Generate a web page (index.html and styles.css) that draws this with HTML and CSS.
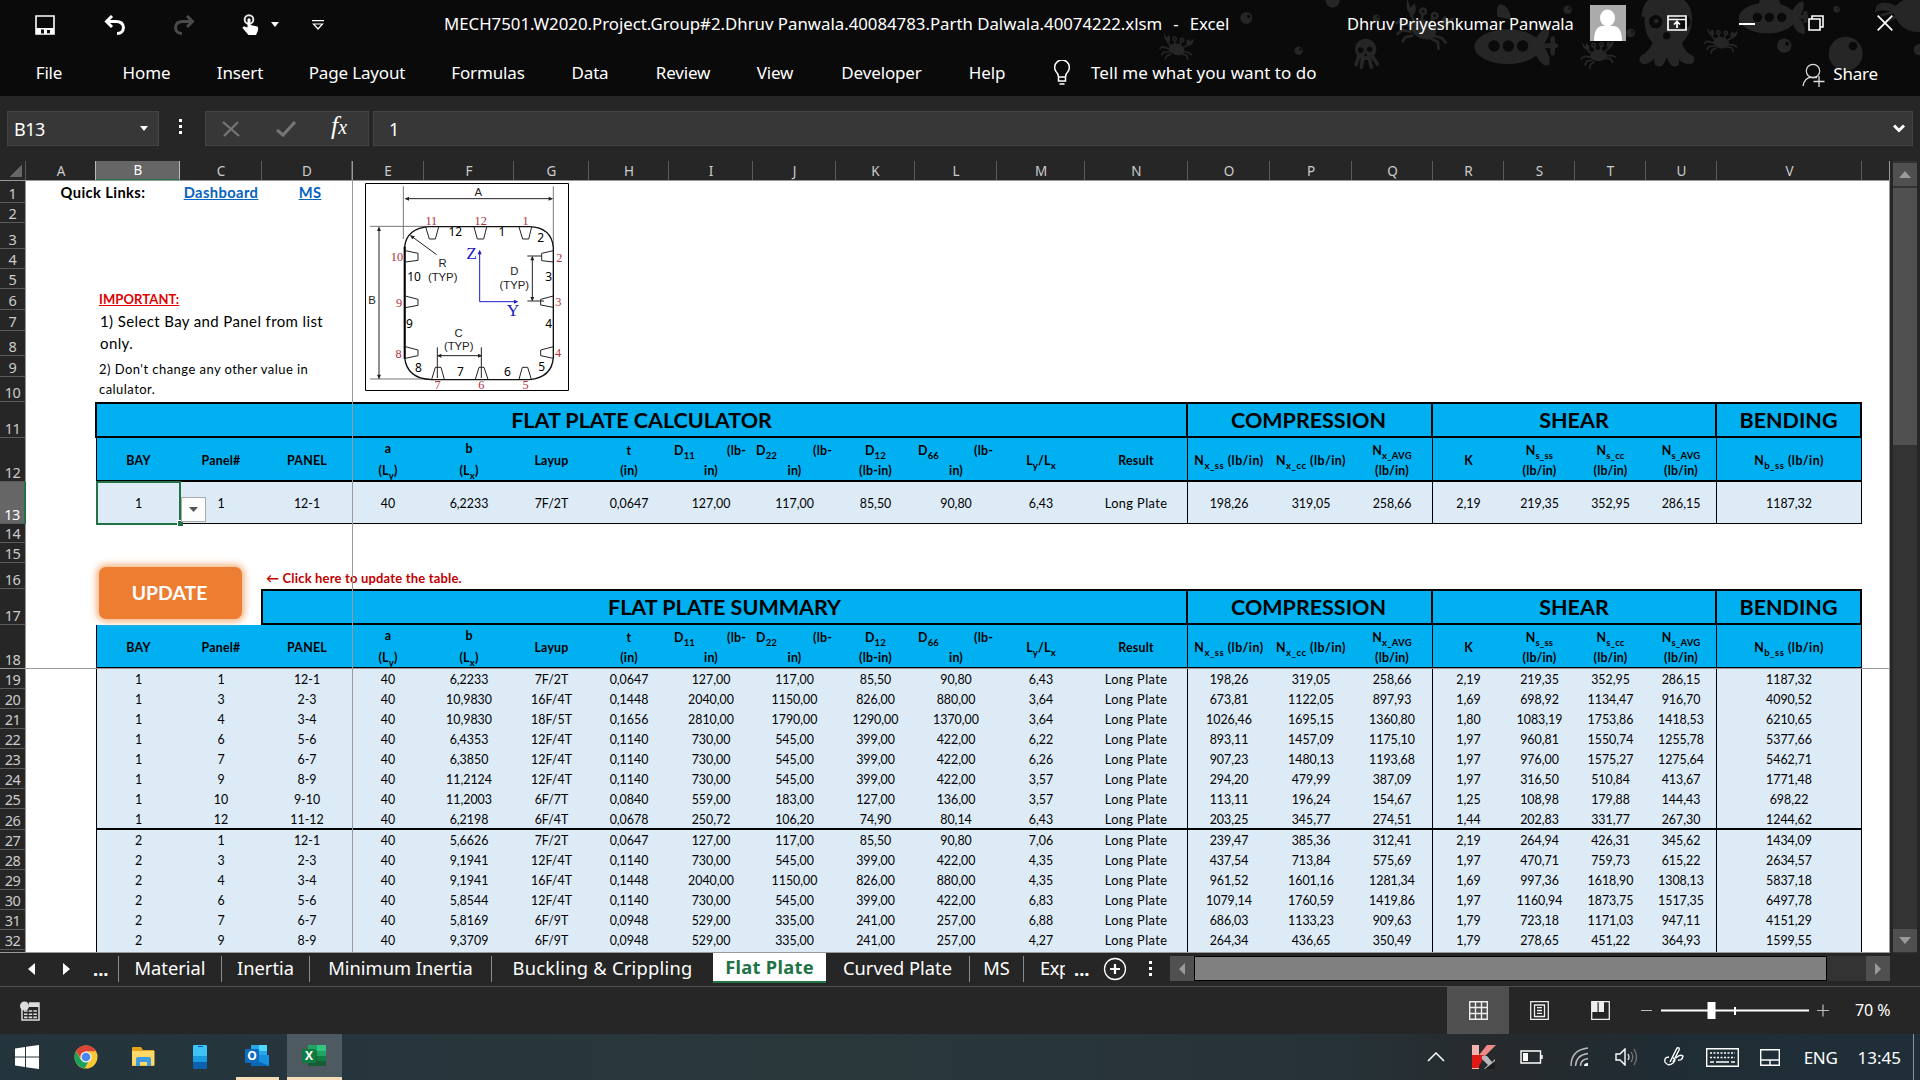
FILE: index.html
```html
<!DOCTYPE html>
<html lang="en">
<head>
<meta charset="utf-8">
<title>MECH7501.W2020.Project.Group#2 - Excel</title>
<link rel="stylesheet" href="styles.css">
</head>
<body>
<div class="app">
  <header class="ribbon">
    <svg class="sea" viewBox="0 0 2340 288" preserveAspectRatio="none" aria-hidden="true">
      <defs>
        <g id="crab">
          <ellipse cx="0" cy="0" rx="24" ry="17" transform="rotate(15)"/>
          <g fill="none" stroke="#262626" stroke-width="5">
            <path d="M-20 0l-22-8-10 6M-20 8l-18 0-8 10M-16 14l-14 6-4 10M20 8l16 2 10 8M16 14l14 4 4 14M-18-10l-10-14M20-6l18-8M-6-14v-14M10-12l4-14"/>
            <circle cx="-6" cy="-32" r="5"/><circle cx="16" cy="-28" r="5"/>
          </g>
          <path d="M-38-50q-2 26 16 28q6-10-2-22l-6 10zM52-32q-4 24-20 20q-8-10 4-20l4 8z"/>
        </g>
        <g id="bubble"><circle r="18"/><circle cx="7" cy="-5" r="5" fill="#0a0a0a"/></g>
      </defs>
      <g fill="#262626">
        <use href="#crab" x="110" y="148"/>
        <use href="#bubble" x="319" y="54"/>
        <circle cx="578" cy="2" r="21"/>
        <use href="#bubble" transform="translate(476 152) scale(.7)"/>
        <use href="#bubble" transform="translate(709 54) scale(.6)"/>
        <g>
          <ellipse cx="677" cy="148" rx="32" ry="32"/>
          <path d="M656 170l-8 24M668 176l-4 26M688 176l6 26M698 170l14 22" stroke="#262626" stroke-width="11" stroke-linecap="round"/>
          <g fill="#0a0a0a"><circle cx="662" cy="150" r="8"/><circle cx="689" cy="148" r="8"/><circle cx="677" cy="165" r="4"/></g>
        </g>
        <use href="#crab" transform="translate(850 88) scale(1.65) rotate(10)"/>
        <path d="M1072 50q-6-36 10-38q30 8 30 46z"/>
        <ellipse cx="1103" cy="140" rx="100" ry="52"/>
        <path d="M1185 120q20-38 42-34q6 20-18 48q26 34 18 62q-26 6-42-40z"/>
        <path d="M1212 137h36M1238 116v44" stroke="#262626" stroke-width="14" stroke-linecap="round"/>
        <g fill="#0a0a0a"><circle cx="1062" cy="138" r="17"/><circle cx="1105" cy="138" r="17"/><circle cx="1148" cy="138" r="17"/></g>
        <use href="#bubble" transform="translate(1283 29) scale(.7)"/>
        <use href="#bubble" transform="translate(1472 99) scale(.7)"/>
        <use href="#crab" transform="translate(1376 166) scale(1.05) rotate(-15)"/>
        <path d="M1504 50q6-58 46-58h66q36 12 40 58q2 50-30 78q8 30 34 40q10 22-12 24q-20 0-32-14q6 22-12 22q-16-2-24-30q-8 30-22 30q-20 0-14-26q-16 20-34 18q-18-6-8-24q26-14 36-40q-28-28-24-78z"/>
        <g fill="#0a0a0a"><circle cx="1547" cy="65" r="20"/><circle cx="1632" cy="65" r="20"/><circle cx="1580" cy="107" r="11"/></g>
        <circle cx="1549" cy="63" r="7"/>
        <use href="#crab" transform="translate(1744 128) rotate(-5)"/>
        <path d="M1860-4h56l6 20h-66z"/>
        <ellipse cx="1882" cy="54" rx="86" ry="46"/>
        <path d="M1954 36q20-34 36-32q6 20-12 48q22 30 16 50q-24 4-38-36z"/>
        <path d="M1980 50h24M1996 34v34" stroke="#262626" stroke-width="12"/>
        <g fill="#0a0a0a"><circle cx="1852" cy="52" r="14"/><circle cx="1888" cy="52" r="14"/><circle cx="1925" cy="52" r="14"/></g>
        <use href="#bubble" transform="translate(1933 137) scale(1.2)"/>
        <use href="#bubble" transform="translate(2090 28) scale(.55)"/>
        <circle cx="2117" cy="161" r="51"/><circle cx="2139" cy="138" r="13" fill="#0a0a0a"/>
        <path d="M2262 30q30-40 80-34v96q-60 4-80-62zM2210 30q4-28 50-12l20 16-30-4q-30-6-40 0zM2222 46l40-10M2236 66l36-18" stroke="#262626" stroke-width="8"/>
        <circle cx="2338" cy="149" r="17"/>
      </g>
    </svg>
    <div class="titlebar">
      <div class="quick">
        <svg class="i-save" width="20" height="20" viewBox="0 0 20 20"><path d="M1 1h18v18H1z" fill="none" stroke="#fff" stroke-width="1.6"/><path d="M1 13h18v6h-4v-4h-3v4H1z" fill="#fff"/><path d="M6 14.5h3v4H6z" fill="#111"/></svg>
        <svg class="i-undo" width="22" height="20" viewBox="0 0 22 20"><path d="M8 1L2.500 6.500 8 12M3 6.500h9q7 0 7.500 6-.5 6-6.500 6" fill="none" stroke="#fff" stroke-width="3"/></svg>
        <svg class="i-redo" width="22" height="20" viewBox="0 0 22 20"><path d="M14 1l5.500 5.500L14 12M19 6.500h-9q-7 0-7.500 6 .5 6 6.500 6" fill="none" stroke="#4a4a4a" stroke-width="3"/></svg>
        <svg class="i-touch" width="18" height="22" viewBox="0 0 18 22"><circle cx="7" cy="5.500" r="4.300" fill="none" stroke="#e6e6e6" stroke-width="2"/><path d="M5.500 5q1.500-1.500 3 0v6l7 1.500q1 1 .5 4L14 21H6.500L.5 14q0-2 2-1.500l3 1z" fill="#fff"/></svg>
        <svg class="i-caret" width="8" height="5" viewBox="0 0 8 5"><path d="M0 0h8L4 5z" fill="#fff"/></svg>
        <svg class="i-custom" width="12" height="10" viewBox="0 0 12 10"><path d="M0 .7h12M1.500 4h9L6 9z" fill="none" stroke="#fff" stroke-width="1.200"/></svg>
      </div>
      <div class="doc">MECH7501.W2020.Project.Group#2.Dhruv Panwala.40084783.Parth Dalwala.40074222.xlsm<span class="dash">-</span>Excel</div>
      <div class="account">Dhruv Priyeshkumar Panwala</div>
      <svg class="avatar" width="36" height="36" viewBox="0 0 36 36"><path d="M0 0h36v36H0z" fill="#ababab"/><ellipse cx="17.500" cy="13" rx="7.500" ry="8.500" fill="#fff"/><path d="M4 36q0-14 8-15h12q8 1 8 15z" fill="#fff"/></svg>
      <svg class="w-ribbon" width="20" height="16" viewBox="0 0 20 16"><path d="M1 1h18v14H1zM1 4.500h18M10 13V7M7 9.500l3-3 3 3" fill="none" stroke="#fff" stroke-width="1.700"/></svg>
      <svg class="w-min" width="16" height="2"><path d="M0 1h16" stroke="#fff" stroke-width="2"/></svg>
      <svg class="w-max" width="16" height="16" viewBox="0 0 16 16"><path d="M1 4h11v11H1zM4 4V1h11v11h-3" fill="none" stroke="#fff" stroke-width="1.600"/></svg>
      <svg class="w-close" width="16" height="16" viewBox="0 0 16 16"><path d="M.7.700l14.600 14.600M15.300.700L.7 15.300" stroke="#fff" stroke-width="1.700"/></svg>
    </div>
    <nav class="tabs">
      <span class="t-file">File</span><span class="t-home">Home</span><span class="t-insert">Insert</span><span class="t-layout">Page Layout</span><span class="t-formulas">Formulas</span><span class="t-data">Data</span><span class="t-review">Review</span><span class="t-view">View</span><span class="t-dev">Developer</span><span class="t-help">Help</span>
      <svg class="bulb" width="18" height="26" viewBox="0 0 18 26"><path d="M5.500 17q0-3-2.500-5.500a7.300 7.300 0 1 1 12 0Q12.500 14 12.500 17zM5.500 17v4h7v-4M6.500 24h5" fill="none" stroke="#fff" stroke-width="1.500"/></svg>
      <span class="tell">Tell me what you want to do</span>
      <svg class="person" width="24" height="24" viewBox="0 0 24 24"><circle cx="11" cy="8" r="6.700" fill="none" stroke="#ddd" stroke-width="1.200"/><path d="M1 23q2-9 9-8.500h5M11.500 18.500h11M17 13v11" fill="none" stroke="#ddd" stroke-width="1.300"/></svg>
      <span class="share">Share</span>
    </nav>
  </header>

  <section class="formula">
    <div class="namebox"><span>B13</span><svg width="8" height="5" viewBox="0 0 8 5"><path d="M0 0h8L4 5z" fill="#fff"/></svg></div>
    <svg class="grip" width="4" height="16"><path d="M0 0h3v3H0zM0 6h3v3H0zM0 12h3v3H0z" fill="#fff"/></svg>
    <div class="fx">
      <svg width="18" height="16" viewBox="0 0 18 16"><path d="M1 1l16 14M16 1L2 15" stroke="#757575" stroke-width="2.300"/></svg>
      <svg width="20" height="16" viewBox="0 0 20 16"><path d="M1 9l6 5L19 1" fill="none" stroke="#757575" stroke-width="3.200"/></svg>
      <span class="fxs"><i>f</i><i class="x">x</i></span>
    </div>
    <div class="finput"><span>1</span><svg width="12" height="9" viewBox="0 0 12 9"><path d="M1 1.500l5 5 5-5" fill="none" stroke="#fff" stroke-width="3"/></svg></div>
  </section>

  <main class="work">
    <div class="sheet" id="sheet">
      <div class="freeze-v"></div>
      <div class="freeze-h"></div>
      <svg class="diagram" viewBox="75 69 612 624" preserveAspectRatio="none">
        <path d="M76.500 70.500h609v621h-609z" fill="#fff" stroke="#000" stroke-width="3"/>
        <g fill="none" stroke="#777" stroke-width="3"><path d="M190 79v158M640 79v180M90 199h170M90 657h180"/></g>
        <path d="M194 262q4-56 72-62h302q66 2 72 62v330q-4 60-72 67H274q-74-4-80-67z" fill="none" stroke="#111" stroke-width="4"/>
        <path d="M194 260v336" stroke="#000" stroke-width="6"/>
        <g fill="none" stroke="#222" stroke-width="3">
          <path d="M257 201l11 36h18l10-36M402 201l10 36h19l9-36M537 201l11 36h18l9-36"/>
          <path d="M275 658l11-36h17l10 36M406 658l11-36h15l12 36M537 658l10-36h16l11 36"/>
          <path d="M196 272l38 8v21l-38 5M196 408l38 10v18l-38 7M196 560l38 10v17l-38 8"/>
          <path d="M640 272l-35 8v22l35 4M640 408l-38 10v17l38 7M640 560l-38 10v17l38 8"/>
          <path d="M197 116h440M117 202v454M290 284l-78-57M577 290v132M562 288h44M562 423h50M292 587h132M292 562v92M424 562v92"/>
        </g>
        <g fill="#222"><path d="M194 116l13-6v12zM639 116l-13-6v12zM117 200l-6 13h12zM117 657l-6-13h12zM210 226l15 3-8 9zM577 288l-6 13h12zM577 424l-6-13h12zM291 587l13-6v12zM427 587l-13-6v12z"/></g>
        <path d="M419 274v151h112" fill="none" stroke="#1c1cc8" stroke-width="3"/><path d="M419 269l-6 14h12zM535 425l-13-6v12z" fill="#1c1cc8"/>
        <g class="d-red"><text x="274" y="196">11</text><text x="422" y="196">12</text><text x="557" y="196">1</text><text x="171" y="304">10</text><text x="658" y="306">2</text><text x="177" y="441">9</text><text x="655" y="437">3</text><text x="176" y="593">8</text><text x="654" y="591">4</text><text x="293" y="688">7</text><text x="424" y="688">6</text><text x="557" y="688">5</text></g>
        <g class="d-num"><text x="346" y="228">12</text><text x="486" y="228">1</text><text x="602" y="246">2</text><text x="222" y="363">10</text><text x="626" y="363">3</text><text x="208" y="503">9</text><text x="626" y="503">4</text><text x="235" y="636">8</text><text x="361" y="648">7</text><text x="502" y="648">6</text><text x="605" y="633">5</text></g>
        <g class="d-lab"><text x="415" y="108">A</text><text x="96" y="431">B</text><text x="308" y="321">R</text><text x="308" y="362">(TYP)</text><text x="523" y="346">D</text><text x="523" y="388">(TYP)</text><text x="356" y="530">C</text><text x="356" y="571">(TYP)</text></g>
        <g class="d-ax"><text x="395" y="296">Z</text><text x="519" y="469">Y</text></g>
      </svg>
      <button class="update">UPDATE</button>
      <div class="note note1">1) Select Bay and Panel from list<br>only.</div>
      <div class="note note2">2) Don't change any other value in<br>calulator.</div>
    </div>
    <div class="vscroll">
      <div class="vbtn"><svg width="12" height="7" viewBox="0 0 12 7"><path d="M0 7h12L6 0z" fill="#9a9a9a"/></svg></div>
      <div class="vthumb"></div>
      <div class="vbtn vdown"><svg width="12" height="7" viewBox="0 0 12 7"><path d="M0 0h12L6 7z" fill="#9a9a9a"/></svg></div>
    </div>
  </main>

  <nav class="sheettabs">
    <svg class="s-prev" width="7" height="12"><path d="M7 0v12L0 6z" fill="#fff"/></svg>
    <svg class="s-next" width="7" height="12"><path d="M0 0v12l7-6z" fill="#fff"/></svg>
    <span class="s-more">...</span>
    <span class="s s1"><b>Material</b></span><span class="s s2"><b>Inertia</b></span><span class="s s3"><b>Minimum Inertia</b></span><span class="s s4"><b>Buckling &amp; Crippling</b></span><span class="s active"><b>Flat Plate</b></span><span class="s s6"><b>Curved Plate</b></span><span class="s s7"><b>MS</b></span><span class="s8">Exp</span>
    <span class="s-more2">...</span>
    <svg class="s-plus" width="24" height="24" viewBox="0 0 24 24"><circle cx="12" cy="12" r="10.500" fill="none" stroke="#fff" stroke-width="1.300"/><path d="M12 7v10M7 12h10" stroke="#fff" stroke-width="2.200"/></svg>
    <svg class="s-grip" width="4" height="16"><path d="M0 0h3v3H0zM0 6h3v3H0zM0 12h3v3H0z" fill="#fff"/></svg>
    <div class="hscroll">
      <div class="hbtn"><svg width="6" height="12"><path d="M6 0v12L0 6z" fill="#9a9a9a"/></svg></div>
      <div class="hthumb"></div>
      <div class="hbtn hright"><svg width="6" height="12"><path d="M0 0v12l6-6z" fill="#9a9a9a"/></svg></div>
    </div>
  </nav>

  <footer class="status">
    <svg class="macro" width="21" height="20" viewBox="0 0 21 20"><path d="M2 6v13h17V2H9" fill="none" stroke="#ddd" stroke-width="1.500"/><circle cx="4.500" cy="5" r="4.500" fill="#ddd"/><path d="M9 2h10v4H9z" fill="#ddd"/><path d="M4 10h13M4 13.200h13M4 16.400h13" stroke="#ddd" stroke-width="1.600" stroke-dasharray="3.500 1.200"/></svg>
    <div class="view on"><svg width="19" height="19" viewBox="0 0 19 19"><path d="M.7.700h17.600v17.600H.7zM6.500 1v17M12.500 1v17M1 6.500h17M1 12.500h17" fill="none" stroke="#eee" stroke-width="1.400"/></svg></div>
    <div class="view"><svg width="19" height="19" viewBox="0 0 19 19"><path d="M.7.700h17.600v17.600H.7zM4.500 4h10v11.500h-10zM7 6.700h5M7 9.500h5M7 12.300h5" fill="none" stroke="#eee" stroke-width="1.300"/></svg></div>
    <div class="view"><svg width="19" height="19" viewBox="0 0 19 19"><path d="M.7.700h17.600v17.600H.7z" fill="none" stroke="#eee" stroke-width="1.300"/><path d="M1 1h5.500v10H1zM7.700 1H13v10H7.700z" fill="#eee"/></svg></div>
    <svg class="slider" width="190" height="20" viewBox="0 0 190 20"><path d="M0 9.500h11M176 9.500h12M182 3.500v12" stroke="#bbb" stroke-width="1.200"/><path d="M20 9.500h148" stroke="#fff" stroke-width="1.800"/><path d="M66.500 1h8v17h-8zM93 6h2v8h-2z" fill="#fff"/></svg>
    <span class="zoom">70 %</span>
  </footer>

  <footer class="taskbar">
    <svg class="win" width="24" height="24" viewBox="0 0 24 24"><path d="M0 3.500l10-1.500v9.500H0zM11 1.800L24 0v11.500H11zM0 12.500h10V22L0 20.500zM11 12.500h13V24l-13-1.800z" fill="#fff"/></svg>
    <svg class="chrome" width="24" height="24" viewBox="0 0 24 24"><circle cx="12" cy="12" r="11.500" fill="#fbc834"/><path d="M12 .5A11.500 11.500 0 0 1 22 6.300H12L6.500 13 2 6.300A11.500 11.500 0 0 1 12 .5z" fill="#dc4438"/><path d="M2 6.300A11.500 11.500 0 0 0 10.500 23.400L16 14l-9 1z" fill="#1ba15e"/><circle cx="12" cy="12" r="5.600" fill="#f2f2f2"/><circle cx="12" cy="12" r="4.300" fill="#4687f0"/></svg>
    <svg class="folder" width="23" height="20" viewBox="0 0 23 20"><path d="M0 1q0-1 1-1h8l2 3h11v16H0z" fill="#e8a21c"/><path d="M0 4h22.500v14.500H0z" fill="#ffd968"/><path d="M4 19v-7q0-2 2-2h11q2 0 2 2v7h-4v-4H8v4z" fill="#3f9be0"/></svg>
    <svg class="phone" width="14" height="24" viewBox="0 0 14 24"><path d="M0 1q0-1 1-1h12q1 0 1 1v11H0z" fill="#3cc4f4"/><path d="M0 11h14v6H0z" fill="#1a9be0"/><path d="M0 17h14v6q0 1-1 1H1q-1 0-1-1z" fill="#0d62ae"/><path d="M5 1.500h5" stroke="#0d62ae"/></svg>
    <div class="app-o"><svg width="24" height="22" viewBox="0 0 24 22"><path d="M6 0h16v12H6z" fill="#28a8ea"/><path d="M14 0h8v6h-8z" fill="#50d9ff"/><path d="M6 10h18v11H6z" fill="#1490df"/><path d="M6 13l18 8H6z" fill="#0a67b5"/><rect y="4" width="14" height="14" rx="1" fill="#0f6cbd"/><text x="7" y="15.300" class="app-letter">O</text></svg></div>
    <div class="app-x"><svg width="24" height="22" viewBox="0 0 24 22"><path d="M6 0h18v6H6z" fill="#21a366"/><path d="M15 0h9v6h-9z" fill="#33c481"/><path d="M6 6h18v5H6z" fill="#107c41"/><path d="M15 6h9v5h-9z" fill="#21a366"/><path d="M6 11h18v10H6z" fill="#185c37"/><path d="M15 11h9v5h-9z" fill="#107c41"/><rect y="4" width="14" height="14" rx="1" fill="#107c41"/><text x="7" y="15.300" class="app-letter">X</text></svg></div>
    <div class="tray">
      <svg width="18" height="10"><path d="M1 9l8-8 8 8" fill="none" stroke="#fff" stroke-width="1.500"/></svg>
      <svg class="y-kasp" width="25" height="25" viewBox="0 0 25 25"><path d="M1 0h7v24H1z" fill="#f4b4b0"/><path d="M1 10h7v13H1z" fill="#e01818"/><path d="M8 10L16 0h9L14 11z" fill="#f08a86"/><path d="M8 10l6 1-6 10z" fill="#d81c1c"/><path d="M11 11h5l5 6 3-3v10H13l4-4-6-6z" fill="#b8b8b8"/><path d="M14 24h10v-8z" fill="#1c1c1c"/></svg>
      <svg class="y-batt" width="23" height="14" viewBox="0 0 23 14"><path d="M1 1h19.500v12H1zM22 5v4" fill="none" stroke="#fff" stroke-width="1.400"/><path d="M3 3h5v8H3z" fill="#fff"/></svg>
      <svg class="y-wifi" width="20" height="20" viewBox="0 0 20 20"><g fill="none" stroke="#bbb" stroke-width="1.400"><path d="M1 19Q1 3 18 1M5.500 19Q6 8 18 6.500M10.500 19q0-6.500 7.500-7.500"/></g><path d="M14 19q0-3 4-3v3z" fill="#fff"/></svg>
      <svg class="y-sound" width="23" height="18" viewBox="0 0 23 18"><path d="M1 6h4l5-5v16l-5-5H1z" fill="none" stroke="#fff" stroke-width="1.400"/><path d="M13 6q2 3 0 6" fill="none" stroke="#ddd" stroke-width="1.300"/><path d="M16 4q3.500 5 0 10M19 1q5 8 0 16" fill="none" stroke="#777" stroke-width="1.300"/></svg>
      <svg class="y-pen" width="21" height="20" viewBox="0 0 21 20"><path d="M6 15L13 1q3-1 2 2L9 15M5 10q-5 0-4 5 3 5 8 1 4-4 0-5M12 11q4-4 7-2-1 5-5 4" fill="none" stroke="#fff" stroke-width="1.400"/></svg>
      <svg class="y-key" width="33" height="19" viewBox="0 0 33 19"><path d="M.7.700h31.600v17.600H.7z" fill="none" stroke="#fff" stroke-width="1.400"/><path d="M4 5h25M4 9.500h25" stroke="#fff" stroke-width="1.300" stroke-dasharray="2 1.500"/><path d="M4 14h4M10 14h13M25 14h4" stroke="#fff" stroke-width="1.300"/></svg>
      <svg class="y-pad" width="20" height="17" viewBox="0 0 20 17"><path d="M.7.700h18.600v15.600H.7zM1 11h18M10 11v5" fill="none" stroke="#fff" stroke-width="1.400"/></svg>
      <span class="eng">ENG</span><span class="clock">13:45</span>
    </div>
  </footer>
</div>
<script src="sheet.js"></script>
</body>
</html>
```
FILE: sheet.js
```js
const columns = 'ABCDEFGHIJKLMNOPQRSTUV'.split('');
const sub = (base, s) => `${base}<sub>${s}</sub>`;
const split = (base, s) => `<span class="wide"><span>${sub(base, s)}</span><span>(lb-</span></span>in)`;
const heads = [
  'BAY', 'Panel#', 'PANEL',
  `<span class="tall">a<br>(${sub('L', 'y')})</span>`, `<span class="tall">b<br>(${sub('L', 'x')})</span>`,
  'Layup', 't<br>(in)', split('D', '11'), split('D', '22'), `${sub('D', '12')}<br>(lb-in)`, split('D', '66'),
  `${sub('L', 'y')}/${sub('L', 'x')}`, 'Result',
  `${sub('N', 'x_ss')} (lb/in)`, `${sub('N', 'x_cc')} (lb/in)`, `${sub('N', 'x_AVG')}<br>(lb/in)`,
  'K', `${sub('N', 's_ss')}<br>(lb/in)`, `${sub('N', 's_cc')}<br>(lb/in)`, `${sub('N', 's_AVG')}<br>(lb/in)`,
  `${sub('N', 'b_ss')} (lb/in)`
];
const rows = `1|1|12-1|40|6,2233|7F/2T|0,0647|127,00|117,00|85,50|90,80|6,43|Long Plate|198,26|319,05|258,66|2,19|219,35|352,95|286,15|1187,32
1|3|2-3|40|10,9830|16F/4T|0,1448|2040,00|1150,00|826,00|880,00|3,64|Long Plate|673,81|1122,05|897,93|1,69|698,92|1134,47|916,70|4090,52
1|4|3-4|40|10,9830|18F/5T|0,1656|2810,00|1790,00|1290,00|1370,00|3,64|Long Plate|1026,46|1695,15|1360,80|1,80|1083,19|1753,86|1418,53|6210,65
1|6|5-6|40|6,4353|12F/4T|0,1140|730,00|545,00|399,00|422,00|6,22|Long Plate|893,11|1457,09|1175,10|1,97|960,81|1550,74|1255,78|5377,66
1|7|6-7|40|6,3850|12F/4T|0,1140|730,00|545,00|399,00|422,00|6,26|Long Plate|907,23|1480,13|1193,68|1,97|976,00|1575,27|1275,64|5462,71
1|9|8-9|40|11,2124|12F/4T|0,1140|730,00|545,00|399,00|422,00|3,57|Long Plate|294,20|479,99|387,09|1,97|316,50|510,84|413,67|1771,48
1|10|9-10|40|11,2003|6F/7T|0,0840|559,00|183,00|127,00|136,00|3,57|Long Plate|113,11|196,24|154,67|1,25|108,98|179,88|144,43|698,22
1|12|11-12|40|6,2198|6F/4T|0,0678|250,72|106,20|74,90|80,14|6,43|Long Plate|203,25|345,77|274,51|1,44|202,83|331,77|267,30|1244,62
2|1|12-1|40|5,6626|7F/2T|0,0647|127,00|117,00|85,50|90,80|7,06|Long Plate|239,47|385,36|312,41|2,19|264,94|426,31|345,62|1434,09
2|3|2-3|40|9,1941|12F/4T|0,1140|730,00|545,00|399,00|422,00|4,35|Long Plate|437,54|713,84|575,69|1,97|470,71|759,73|615,22|2634,57
2|4|3-4|40|9,1941|16F/4T|0,1448|2040,00|1150,00|826,00|880,00|4,35|Long Plate|961,52|1601,16|1281,34|1,69|997,36|1618,90|1308,13|5837,18
2|6|5-6|40|5,8544|12F/4T|0,1140|730,00|545,00|399,00|422,00|6,83|Long Plate|1079,14|1760,59|1419,86|1,97|1160,94|1873,75|1517,35|6497,78
2|7|6-7|40|5,8169|6F/9T|0,0948|529,00|335,00|241,00|257,00|6,88|Long Plate|686,03|1133,23|909,63|1,79|723,18|1171,03|947,11|4151,29
2|9|8-9|40|9,3709|6F/9T|0,0948|529,00|335,00|241,00|257,00|4,27|Long Plate|264,34|436,65|350,49|1,79|278,65|451,22|364,93|1599,55`.split('\n').map(r => r.split('|'));

const cells = list => '<div></div>' + list.map((v, i) => `<div class="c c-${columns[i + 1]}">${v}</div>`).join('');
const titles = (text, cls) =>
  `<div class="c t-main ${cls}">${text}</div><div class="c t-comp">COMPRESSION</div><div class="c t-shear">SHEAR</div><div class="c t-bend">BENDING</div>`;

const content = {
  1: ['links', '<b class="ql">Quick Links:</b><a class="l-dash">Dashboard</a><a class="l-ms">MS</a>'],
  6: ['', '<b class="important">IMPORTANT:</b>'],
  11: ['title', titles('FLAT PLATE CALCULATOR', '')],
  12: ['head', cells(heads)],
  13: ['data calc', cells(rows[0])],
  16: ['', '<b class="click">← Click here to update the table.</b>'],
  17: ['title', titles('FLAT PLATE SUMMARY', 'short')],
  18: ['head last', cells(heads)]
};
rows.forEach((r, i) => { content[19 + i] = ['data' + (i === 7 ? ' group' : ''), cells(r)]; });
content[33] = ['data', cells(heads.map(() => ''))];

let html = '<div class="row colhead"><div class="corner"></div>' +
  columns.map(c => `<div class="ch${c === 'B' ? ' sel' : ''}">${c}</div>`).join('') + '</div>';
for (let n = 1; n <= 33; n++) {
  const [cls, body] = content[n] || ['', ''];
  html += `<div class="row r${n} ${cls}"><div class="rh${n === 13 ? ' sel' : ''}">${n < 33 ? n : ''}</div>${body}</div>`;
}
document.getElementById('sheet').insertAdjacentHTML('afterbegin', html);
document.querySelector('.r13 .c-B').insertAdjacentHTML('beforeend',
  '<span class="handle"></span><span class="drop"><svg width="9" height="5"><path d="M0 0h9L4.500 5z" fill="#555"/></svg></span>');
```
FILE: styles.css
```css
* { box-sizing: border-box; }
body { margin: 0; background: #262626; }
svg { display: block; flex: none; }
.app { width: 1920px; height: 1080px; overflow: hidden; display: flex; flex-direction: column; font-family: "Noto Sans", "Open Sans", sans-serif; color: #fff; position: relative; }

/* title bar and ribbon tabs */
.ribbon { height: 96px; background: #0a0a0a; position: relative; }
.sea { position: absolute; left: 1140px; top: 0; width: 780px; height: 96px; }
.titlebar { height: 48px; display: flex; align-items: center; position: relative; font-size: 16.8px; white-space: nowrap; }
.quick { width: 444px; display: flex; align-items: center; padding: 1px 0 0 35px; }
.i-undo { margin-left: 49px; }
.i-redo { margin-left: 47px; }
.i-touch { margin-left: 47px; }
.i-caret { margin-left: 11px; }
.i-custom { margin-left: 33px; }
.doc { width: 903px; padding-bottom: 2px; }
.dash { margin: 0 11px; }
.account { width: 243px; padding-bottom: 2px; font-size: 16.500px; letter-spacing: -0.08px; }
.avatar { margin-top: -2px; }
.w-ribbon { margin: -2px 0 0 41px; }
.w-min { margin-left: 52px; }
.w-max { margin: -2px 0 0 53px; }
.w-close { margin: -2px 0 0 53px; }
.tabs { height: 48px; display: flex; align-items: center; position: relative; font-size: 17px; letter-spacing: -0.15px; white-space: nowrap; text-align: center; }
.tabs > span { display: flex; justify-content: center; padding-top: 1px; }
.t-file { width: 98px; } .t-home { width: 97px; } .t-insert { width: 90px; } .t-layout { width: 144px; } .t-formulas { width: 118px; }
.t-data { width: 86px; } .t-review { width: 100px; } .t-view { width: 84px; } .t-dev { width: 129px; } .t-help { width: 82px; }
.bulb { margin: 2px 0 0 25px; }
.tabs > .tell { margin-left: 20px; letter-spacing: 0.05px; }
.person { margin: 6px 0 0 auto; }
.tabs > .share { margin: 1px 42px 0 7px; letter-spacing: -0.2px; }

/* formula bar */
.formula { height: 65px; padding: 15px 7px 15px; display: flex; align-items: stretch; font-size: 18px; background: #262626; }
.formula > div { background: #373737; border: 1px solid #444; display: flex; align-items: center; }
.namebox { width: 152px; justify-content: space-between; padding: 0 10px 0 6px; letter-spacing: -0.5px; }
.grip { margin: 8px 22px 0 20px; }
.fx { width: 164px; margin-right: 4px; padding-left: 16px; }
.fx svg + svg { margin-left: 36px; }
.fxs { margin: -5px 0 0 35px; font: italic 26px "Liberation Serif", serif; }
.fxs .x { font-size: 20px; }
.finput { flex: 1; justify-content: space-between; padding: 0 7px 0 15px; }

/* worksheet */
.work { height: 792px; display: flex; background: #262626; }
.sheet { width: 1890px; position: relative; background: #fff; color: #000; overflow: hidden; font-family: Lato, sans-serif; font-size: 12.4px; border-bottom: 1px solid #999; border-right: 1px solid #999; }
.row { display: grid; grid-template-columns: 26px 70px 84px 82px 90px 72px 90px 75px 80px 84px 83px 79px 82px 88px 103px 82px 82px 81px 71px 71px 71px 71px 145px 28px; }
.colhead { height: 20px; background: #262626; font: 13.5px "Noto Sans", sans-serif; color: #ccc; border-bottom: 1px solid #999; }
.ch { border-right: 1px solid #5a5a5a; display: flex; align-items: center; justify-content: center; padding-left: 1px; }
.corner { border-right: 1px solid #5a5a5a; background: linear-gradient(135deg, transparent 50%, #666 50%) 9px 4px / 13px 12px no-repeat; }
.ch.sel { background: #666; color: #fff; border-bottom: 1px solid #217346; border-right-color: #bbb; box-shadow: -1px 0 #bbb; }
.rh { background: #262626; color: #ccc; border-bottom: 1px solid #5a5a5a; border-right: 1px solid #999; font: 14.5px/18px "Noto Sans", sans-serif; letter-spacing: -0.5px; display: flex; align-items: flex-end; justify-content: center; }
.rh.sel { background: #666; color: #fff; border-right: 2px solid #217346; }
.r1 { height: 22px; } .r2, .r4, .r5, .r15 { height: 20px; } .r3, .r16 { height: 26px; } .r6, .r7, .r9 { height: 21px; }
.r8, .r10 { height: 25px; } .r11, .r17 { height: 36px; } .r12, .r18 { height: 44px; } .r14 { height: 19px; }
.row.data { height: 20px; }
.row.calc { height: 42px; }
.row.group { height: 21px; }

.c { display: flex; align-items: center; justify-content: center; text-align: center; white-space: nowrap; position: relative; }
.title .c { background: #00b0f0; border: 2px solid #000; border-left: 0; font-size: 21.500px; font-weight: 700; }
.title .t-main { grid-column: 3 / 16; border-left: 2px solid #000; margin-left: -1px; }
.title .t-main.short { grid-column: 5 / 16; }
.t-comp { grid-column: 16 / 19; padding-right: 2px; } .t-shear { grid-column: 19 / 23; } .t-bend { grid-column: 23; }
.head .c { height: 44px; background: #00b0f0; border-bottom: 2px solid #000; font-weight: 700; letter-spacing: 0.2px; line-height: 20px; display: block; padding-top: 3px; }
.head.last .c { border-bottom-width: 1px; height: 43px; }
.head .c-B, .head .c-C, .head .c-D, .head .c-G, .head .c-M, .head .c-N, .head .c-O, .head .c-P, .head .c-R, .head .c-V { padding-top: 13px; }
.head .c-O, .head .c-P, .head .c-V { letter-spacing: 0.5px; }
.tall { display: block; line-height: 22px; margin-top: -3px; }
.wide { display: flex; justify-content: space-between; padding: 0 7px 0 5px; height: 20px; }
.c-J .wide, .c-L .wide { padding: 0 4px 0 3px; }
sub { font-size: 9.500px; line-height: 0; vertical-align: -4px; }
.data .c { background: #ddebf7; }
.data .c-N { font-size: 12.8px; letter-spacing: 0.4px; }
.calc .c { border-bottom: 1px solid #000; padding-top: 1px; }
.group .c { border-bottom: 2px solid #000; padding-top: 1px; }
.head .c-B, .data .c-B { border-left: 1px solid #000; }
.head .c-N, .data .c-N, .head .c-Q, .data .c-Q, .head .c-U, .data .c-U, .head .c-V, .data .c-V { border-right: 1px solid #000; }
.calc .c-B { z-index: 2; }
.calc .c-B::after { content: ""; position: absolute; inset: -1px -1px -2px -1px; border: 2px solid #217346; }
.handle { position: absolute; right: -3px; bottom: -3px; width: 6px; height: 6px; background: #217346; border: 1px solid #fff; border-width: 1px 0 0 1px; z-index: 2; }
.drop { position: absolute; left: 84px; top: 15px; width: 25px; height: 25px; background: #fdfdfd; border: 1px solid #ababab; display: flex; align-items: center; justify-content: center; z-index: 2; }

.links b, .links a { font-weight: 700; font-size: 14.7px; letter-spacing: 0.4px; line-height: 22px; white-space: nowrap; text-align: center; }
.ql { grid-column: 2 / 4; }
.links a { color: #0563c1; text-decoration: underline; }
.l-ms { padding-left: 6px; }
.important { grid-column: 3 / 5; color: #e00000; text-decoration: underline; padding-left: 3px; line-height: 20px; font-size: 13px; letter-spacing: 0.1px; }
.click { grid-column: 5 / 12; color: #c00000; padding: 6px 0 0 4px; font-size: 13px; letter-spacing: 0.18px; line-height: 18px; }
.note { position: absolute; white-space: nowrap; }
.note1 { left: 100px; top: 149px; font-size: 15px; letter-spacing: 0.38px; line-height: 22px; }
.note2 { left: 99px; top: 198px; font-size: 13px; letter-spacing: 0.45px; line-height: 20px; }
.diagram { position: absolute; left: 365px; top: 22px; width: 204px; height: 208px; }
.diagram text { text-anchor: middle; }
.d-red { font: 37px "Liberation Serif", serif; fill: #b03040; }
.d-num { font: 36px "Noto Sans", sans-serif; fill: #000; }
.d-lab { font: 34px "Liberation Sans", sans-serif; fill: #222; }
.d-ax { font: 52px "Liberation Serif", serif; fill: #1c1cc8; }
.update { position: absolute; left: 99px; top: 406px; width: 143px; height: 52px; border: 0; border-radius: 7px; background: #ed7d31; color: #fff; font: 700 19.400px Lato, sans-serif; box-shadow: 0 0 6px 3px #f7b98a; padding: 0 2px 2px 0; }
.freeze-v { position: absolute; left: 352px; top: 0; width: 1px; height: 792px; background: #999; z-index: 3; }
.freeze-h { position: absolute; left: 0; top: 507px; width: 1890px; height: 1px; background: #999; z-index: 3; }

.vscroll { width: 24px; margin-left: 3px; padding-top: 2px; display: flex; flex-direction: column; background: #333; }
.vbtn { height: 24px; background: #505050; display: flex; align-items: center; justify-content: center; border-bottom: 1px solid #333; }
.vthumb { height: 257px; margin-top: 1px; background: #505050; }
.vdown { margin-top: auto; }

/* sheet tabs */
.sheettabs { height: 34px; background: #262626; border-bottom: 1px solid #505050; display: flex; align-items: center; font-size: 18.300px; white-space: nowrap; padding-bottom: 2px; }
.s-prev { margin-left: 28px; } .s-next { margin-left: 28px; }
.s-more { width: 48px; padding-left: 23px; font-weight: 700; }
.s { height: 26px; display: flex; align-items: center; justify-content: center; border-right: 1px solid #8a8a8a; }
.s b { font-weight: 400; margin-top: -3px; }
.s1 { width: 104px; border-left: 1px solid #8a8a8a; } .s2 { width: 88px; } .s3 { width: 182px; } .s4 { width: 221px; border: 0; }
.s4 b { letter-spacing: 0.25px; }
.s.active { width: 113px; height: 31px; margin-top: -2px; padding-top: 3px; background: #fff; border: 0; border-bottom: 2px solid #217346; color: #217346; }
.s.active b { font-weight: 700; letter-spacing: 0.3px; }
.s6 { width: 144px; } .s7 { width: 54px; }
.s8 { width: 41px; margin-top: -3px; padding-left: 16px; overflow: hidden; letter-spacing: -0.4px; }
.s-more2 { width: 31px; padding-left: 9px; font-weight: 700; }
.s-plus { margin-left: 7px; } .s-grip { margin-left: 22px; }
.hscroll { width: 720px; height: 25px; margin-left: 17px; display: flex; background: #333; }
.hbtn { width: 24px; background: #505050; display: flex; align-items: center; justify-content: center; }
.hthumb { width: 633px; background: #808080; border: 1px solid #000; }
.hright { margin-left: auto; }

/* status bar */
.status { height: 47px; background: #262626; display: flex; align-items: center; }
.macro { margin: 0 1406px 0 20px; }
.view { width: 61px; height: 47px; display: flex; align-items: center; justify-content: center; }
.view.on { background: #505050; width: 62px; }
.slider { margin-left: 10px; }
.zoom { margin: -1px 0 0 24px; font-size: 16px; letter-spacing: -0.1px; white-space: nowrap; }

/* taskbar */
.taskbar { height: 46px; background: linear-gradient(90deg, #24343c, #2a383c 42%, #263238 70%, #262a2c 78%, #1f2d35 88%, #1f2e38); display: flex; align-items: center; font-size: 17px; }
.win { margin-left: 15px; } .chrome { margin-left: 35px; } .folder { margin-left: 34px; } .phone { margin-left: 38px; }
.app-o, .app-x { height: 46px; display: flex; align-items: center; justify-content: center; border-bottom: 3px solid #f6dcb8; padding-right: 2px; }
.app-o { width: 43px; margin-left: 29px; }
.app-x { width: 55px; margin-left: 8px; background: #4d5a61; }
.app-letter { font: 700 12px "Open Sans", sans-serif; fill: #fff; text-anchor: middle; }
.tray { margin-left: auto; height: 46px; display: flex; align-items: center; border-right: 1px solid #8a9499; margin-right: 6px; padding-right: 12px; }
.y-kasp { margin-left: 26px; } .y-batt { margin-left: 24px; } .y-wifi { margin-left: 27px; } .y-sound { margin-left: 25px; } .y-pen { margin-left: 26px; } .y-key { margin-left: 21px; } .y-pad { margin-left: 21px; }
.eng { margin-left: 24px; letter-spacing: -0.3px; } .clock { margin-left: 20px; letter-spacing: 0; }
```
